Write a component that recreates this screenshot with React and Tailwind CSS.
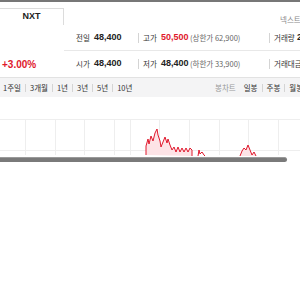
import React from 'react';

const kr = "font-['Noto_Sans_CJK_KR',sans-serif]";
const num = "font-['Liberation_Sans',sans-serif]";

const gridX = [25, 55, 84, 114, 130, 159, 189, 219, 248, 278];

const line =
  'M146,36 L146,27 L148,20 L149,25 L151,17 L153,22 L155,14 L157,10 L158,16 L160,22 L161,28 L163,23 L165,18 L167,24 L168,20 L170,26 L172,31 L174,28 L176,33 L178,28 L180,33 L182,29 L184,33 L186,29 L188,33 L190,29 L192,31 L192,37';
const bits1 = 'M198,37 L199,31 L200,35 L202,33 L204,36 L205,37';
const bits2 = 'M240,37 L242,32 L244,29 L246,31 L248,26 L250,31 L252,36 L254,33 L256,37';

const Sep = ({ h = 'h-[10px]' }) => <span className={`w-px ${h} bg-[#d4d4d4]`} />;

const Stat = ({ label, value, red, extra }) => (
  <div className="flex items-center">
    <span className={`${kr} text-[7.5px] text-[#333] w-[18px]`}>{label}</span>
    <span className={`${num} text-[9px] font-bold w-[29px] ${red ? 'text-[#e0182c]' : 'text-[#222]'}`}>
      {value}
    </span>
    {extra && <span className={`${kr} text-[7.5px] text-[#666]`}>{extra}</span>}
  </div>
);

const App = () => {
  const periods = ['1주일', '3개월', '1년', '3년', '5년', '10년'];

  return (
    <div className="w-[300px] h-[300px] overflow-hidden bg-white">
      <div className="w-[340px]">
        {/* top bar */}
        <div className="h-[2px] bg-[#777]" />

        {/* header tabs */}
        <div className="h-[23px] flex">
          <div className="w-[64px] h-[17px] mt-[6px] border-t border-r border-[#dcdcdc] flex items-center justify-center">
            <span className={`${num} text-[9px] font-bold text-[#222]`}>NXT</span>
          </div>
          <div className="flex-1 pl-[216px] pt-[7px] leading-none">
            <span className={`${kr} text-[7.5px] text-[#888] leading-none`}>넥스트레이드</span>
          </div>
        </div>

        {/* stats */}
        <div className="flex h-[52px]">
          <div className="w-[64px] flex flex-col justify-end">
            <div className="h-[26px] flex items-center pl-[2px]">
              <span className={`${num} text-[10px] font-bold text-[#e0182c]`}>+3.00%</span>
            </div>
          </div>
          <div className="flex-1 flex flex-col">
            <div className="h-[26px] border-b border-[#e8e8e8] flex items-center">
              <div className="w-[74px] pl-[12px]">
                <Stat label="전일" value="48,400" />
              </div>
              <Sep />
              <div className="w-[130px] pl-[4px]">
                <Stat label="고가" value="50,500" red extra="(상한가 62,900)" />
              </div>
              <Sep />
              <div className="pl-[4px] flex items-center">
                <span className={`${kr} text-[7.5px] text-[#333] w-[23px]`}>거래량</span>
                <span className={`${num} text-[9px] font-bold text-[#222]`}>2,114</span>
              </div>
            </div>
            <div className="h-[26px] flex items-center">
              <div className="w-[74px] pl-[12px]">
                <Stat label="시가" value="48,400" />
              </div>
              <Sep />
              <div className="w-[130px] pl-[4px]">
                <Stat label="저가" value="48,400" extra="(하한가 33,900)" />
              </div>
              <Sep />
              <div className="pl-[4px] flex items-center">
                <span className={`${kr} text-[7.5px] text-[#333]`}>거래대금</span>
              </div>
            </div>
          </div>
        </div>

        {/* period tabs */}
        <div className="h-[20px] bg-[#f4f4f5] border-t border-[#e2e2e2] flex items-center">
          <div className="w-[215px] pl-[3px] flex items-center gap-[4px]">
            {periods.map((p, i) => (
              <React.Fragment key={p}>
                {i > 0 && <Sep h="h-[8px]" />}
                <span className={`${kr} text-[7.5px] text-[#333]`}>{p}</span>
              </React.Fragment>
            ))}
          </div>
          <div className="flex items-center gap-[4px]">
            <span className={`${kr} text-[7.5px] text-[#999] mr-[4px]`}>봉차트</span>
            <span className={`${kr} text-[7.5px] text-[#333]`}>일봉</span>
            <Sep h="h-[8px]" />
            <span className={`${kr} text-[7.5px] text-[#333]`}>주봉</span>
            <Sep h="h-[8px]" />
            <span className={`${kr} text-[7.5px] text-[#333]`}>월봉</span>
          </div>
        </div>

        <div className="h-[22px]" />

        {/* chart */}
        <svg width="340" height="38" className="block">
          <line x1="0" y1="0.5" x2="340" y2="0.5" stroke="#eeeeee" />
          <line x1="0" y1="31.5" x2="340" y2="31.5" stroke="#eeeeee" />
          {gridX.map((x) => (
            <line key={x} x1={x + 0.5} y1="0" x2={x + 0.5} y2="36" stroke="#eeeeee" />
          ))}
          <path d={`${line} Z`} fill="#fde3e6" />
          <path d={line} fill="none" stroke="#e0182c" strokeWidth="1" />
          <path d={bits1} fill="none" stroke="#e0182c" strokeWidth="1" />
          <path d={bits2} fill="#fde3e6" stroke="#e0182c" strokeWidth="1" />
        </svg>

        {/* scrollbar */}
        <div className="w-[287px] h-[5px] rounded-r-full bg-[#7a7a7a] border-t border-[#9a9a9a]" />
      </div>
    </div>
  );
};

export default App;
